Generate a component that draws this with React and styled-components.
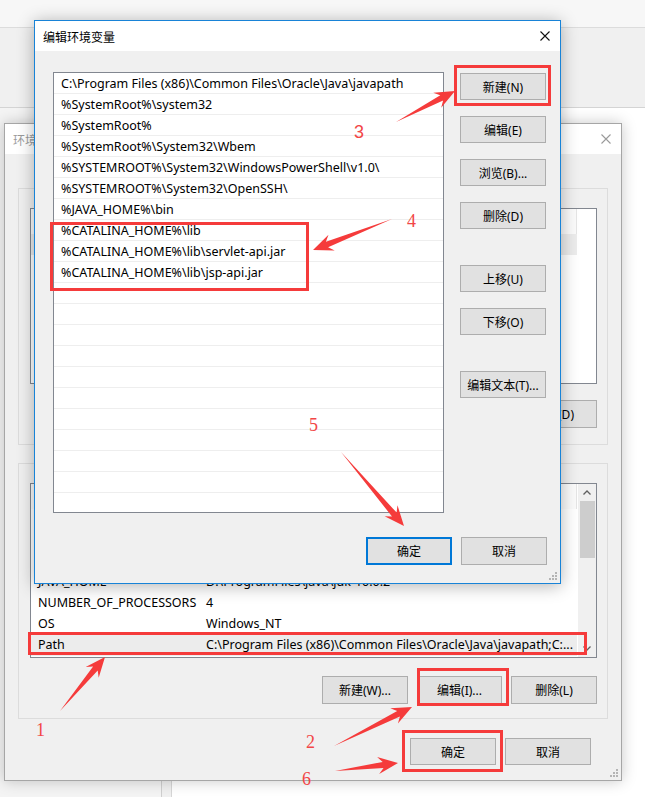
import React from "react";
import styled, { createGlobalStyle } from "styled-components";

const GlobalStyle = createGlobalStyle`
  html, body {
    margin: 0;
    padding: 0;
    background: #ffffff;
  }
  body {
    font-family: "Noto Sans", "Noto Sans CJK SC", sans-serif;
    font-size: 12px;
    color: #000;
  }
`;

const pathItems = [
  "C:\\Program Files (x86)\\Common Files\\Oracle\\Java\\javapath",
  "%SystemRoot%\\system32",
  "%SystemRoot%",
  "%SystemRoot%\\System32\\Wbem",
  "%SYSTEMROOT%\\System32\\WindowsPowerShell\\v1.0\\",
  "%SYSTEMROOT%\\System32\\OpenSSH\\",
  "%JAVA_HOME%\\bin",
  "%CATALINA_HOME%\\lib",
  "%CATALINA_HOME%\\lib\\servlet-api.jar",
  "%CATALINA_HOME%\\lib\\jsp-api.jar",
];

const userVars = [
  ["OneDrive", "C:\\Users\\Administrator\\OneDrive"],
  ["Path", "%USERPROFILE%\\AppData\\Local\\Microsoft\\WindowsApps;"],
  ["TEMP", "%USERPROFILE%\\AppData\\Local\\Temp"],
  ["TMP", "%USERPROFILE%\\AppData\\Local\\Temp"],
];

const sysVars = [
  ["CATALINA_HOME", "D:\\ProgramFiles\\apache-tomcat-9.0.12"],
  ["ComSpec", "C:\\WINDOWS\\system32\\cmd.exe"],
  ["DriverData", "C:\\Windows\\System32\\Drivers\\DriverData"],
  ["JAVA_HOME", "D:\\ProgramFiles\\java\\jdk-10.0.2"],
  ["NUMBER_OF_PROCESSORS", "4"],
  ["OS", "Windows_NT"],
  ["Path", "C:\\Program Files (x86)\\Common Files\\Oracle\\Java\\javapath;C:..."],
];

// red markup drawn over the screenshot
const boxes = [
  [455.5, 66.5, 94, 38],
  [51.5, 223.5, 256, 66],
  [29.5, 633.5, 556, 20],
  [418.5, 669.5, 89, 35],
  [403.5, 731.5, 98, 39],
];

const arrows = [
  [[396, 122], [455, 91]],
  [[392, 219], [313, 250]],
  [[341, 452], [404, 526]],
  [[60, 711], [105, 657]],
  [[334, 746], [412, 707]],
  [[335, 771], [398, 763]],
];

const marks = [
  { n: "3", x: 354, y: 123, sans: true },
  { n: "4", x: 407, y: 212 },
  { n: "5", x: 309, y: 416 },
  { n: "1", x: 36, y: 721 },
  { n: "2", x: 306, y: 733 },
  { n: "6", x: 302, y: 770 },
];

function arrowPoints([x1, y1], [x2, y2]) {
  const head = 20;
  const wing = 8.5;
  const neck = 3;
  const dx = x2 - x1;
  const dy = y2 - y1;
  const len = Math.hypot(dx, dy);
  const ux = dx / len;
  const uy = dy / len;
  const px = -uy;
  const py = ux;
  const nx = x2 - ux * (head - 5);
  const ny = y2 - uy * (head - 5);
  const bx = x2 - ux * head;
  const by = y2 - uy * head;
  return [
    [x1, y1],
    [nx + px * neck, ny + py * neck],
    [bx + px * wing, by + py * wing],
    [x2, y2],
    [bx - px * wing, by - py * wing],
    [nx - px * neck, ny - py * neck],
  ]
    .map((p) => p.map((v) => v.toFixed(1)).join(","))
    .join(" ");
}

const CloseIcon = ({ color }) => (
  <svg width="10" height="10" viewBox="0 0 10 10">
    <path d="M0.5 0.5 L9.5 9.5 M9.5 0.5 L0.5 9.5" stroke={color} strokeWidth="1.1" fill="none" />
  </svg>
);

const Grip = () => (
  <svg width="10" height="10" viewBox="0 0 10 10">
    {[[7, 1], [4, 4], [7, 4], [1, 7], [4, 7], [7, 7]].map(([x, y]) => (
      <rect key={`${x}-${y}`} x={x} y={y} width="2" height="2" fill="#b4b4b4" />
    ))}
  </svg>
);

const Chevron = ({ down }) => (
  <svg width="8" height="5" viewBox="0 0 8 5">
    <path d={down ? "M0.5 0.5 L4 4 L7.5 0.5" : "M0.5 4.5 L4 1 L7.5 4.5"} stroke="#606060" strokeWidth="1.3" fill="none" />
  </svg>
);

export default function App() {
  const emptyRows = Array.from({ length: 21 - pathItems.length });
  return (
    <>
      <GlobalStyle />
      <Desktop>
        <Backdrop>
          <TopStrip />
          <MidStrip />
          <LowerArea>
            <LeftPane />
            <Gutter />
            <RestPane />
          </LowerArea>
        </Backdrop>

        <EnvWindow>
          <TitleBar $inactive>
            <span>环境变量</span>
            <CloseIcon color="#9a9a9a" />
          </TitleBar>
          <EnvBody>
            <GroupBox $height={257}>
              <GroupLabel>Administrator 的用户变量</GroupLabel>
              <VarList $height={176}>
                <VarTable>
                  <HeadRow>
                    <HeadCell>变量</HeadCell>
                    <HeadCell>值</HeadCell>
                  </HeadRow>
                  {userVars.map(([k, v], i) => (
                    <VarRow key={k} $selected={i === 0}>
                      <VarCell>{k}</VarCell>
                      <VarCell>{v}</VarCell>
                    </VarRow>
                  ))}
                </VarTable>
              </VarList>
              <ButtonRow $top={16}>
                <Button $w={86}>新建(N)...</Button>
                <Button $w={86}>编辑(E)...</Button>
                <Button $w={86}>删除(D)</Button>
              </ButtonRow>
            </GroupBox>

            <GroupBox $height={256} $gap={18}>
              <GroupLabel>系统变量(S)</GroupLabel>
              <VarList $height={175}>
                <VarTable>
                  <HeadRow>
                    <HeadCell>变量</HeadCell>
                    <HeadCell>值</HeadCell>
                  </HeadRow>
                  {sysVars.map(([k, v]) => (
                    <VarRow key={k} $selected={k === "Path"}>
                      <VarCell>{k}</VarCell>
                      <VarCell>{v}</VarCell>
                    </VarRow>
                  ))}
                </VarTable>
                <ScrollBar>
                  <ScrollArrow>
                    <Chevron />
                  </ScrollArrow>
                  <Thumb />
                  <ScrollTrack />
                  <ScrollArrow>
                    <Chevron down />
                  </ScrollArrow>
                </ScrollBar>
              </VarList>
              <ButtonRow $top={18}>
                <Button $w={86}>新建(W)...</Button>
                <Button $w={85}>编辑(I)...</Button>
                <Button $w={86}>删除(L)</Button>
              </ButtonRow>
            </GroupBox>

            <Footer $top={19} $right={17}>
              <Button $w={86} $h={27}>确定</Button>
              <Button $w={86} $h={27}>取消</Button>
            </Footer>
          </EnvBody>
          <GripCorner>
            <Grip />
          </GripCorner>
        </EnvWindow>

        <EditWindow>
          <TitleBar>
            <span>编辑环境变量</span>
            <CloseIcon color="#111" />
          </TitleBar>
          <EditBody>
            <EditMain>
              <PathList>
                {pathItems.map((p) => (
                  <PathRow key={p}>{p}</PathRow>
                ))}
                {emptyRows.map((_, i) => (
                  <PathRow key={`e${i}`} />
                ))}
              </PathList>
              <SideButtons>
                <Button $w={86} $h={27}>新建(N)</Button>
                <Button $w={86} $h={27}>编辑(E)</Button>
                <Button $w={86} $h={27}>浏览(B)...</Button>
                <Button $w={86} $h={27}>删除(D)</Button>
                <Button $w={86} $h={27} $space>上移(U)</Button>
                <Button $w={86} $h={27}>下移(O)</Button>
                <Button $w={86} $h={27} $space>编辑文本(T)...</Button>
              </SideButtons>
            </EditMain>
            <Footer $top={24} $right={0}>
              <Button $w={86} $h={28} $primary>确定</Button>
              <Button $w={86} $h={28}>取消</Button>
            </Footer>
          </EditBody>
          <GripCorner>
            <Grip />
          </GripCorner>
        </EditWindow>

        <Markup width="645" height="797" viewBox="0 0 645 797">
          {boxes.map(([x, y, w, h]) => (
            <rect key={`${x}-${y}`} x={x} y={y} width={w} height={h} fill="none" stroke="#f53b3b" strokeWidth="3" />
          ))}
          {arrows.map(([a, b]) => (
            <polygon key={`${a[0]}-${a[1]}`} points={arrowPoints(a, b)} fill="#f53b3b" />
          ))}
        </Markup>
        {marks.map((m) => (
          <Mark key={m.n} $x={m.x} $y={m.y} $sans={m.sans}>
            {m.n}
          </Mark>
        ))}
      </Desktop>
    </>
  );
}

const Desktop = styled.div`
  position: relative;
  width: 645px;
  height: 797px;
  overflow: hidden;
  background: #ffffff;
`;

const Backdrop = styled.div`
  position: absolute;
  inset: 0;
  display: flex;
  flex-direction: column;
`;

const TopStrip = styled.div`
  height: 27px;
  background: #f7f7f7;
  border-bottom: 1px solid #dcdcdc;
`;

const MidStrip = styled.div`
  height: 79px;
  background: #f0f0f0;
  border-bottom: 1px solid #d4d4d4;
`;

const LowerArea = styled.div`
  flex: 1;
  display: flex;
  background: #fafafa;
`;

const LeftPane = styled.div`
  width: 161px;
  background: #f4f4f4;
  border-right: 1px solid #cfcfcf;
`;

const Gutter = styled.div`
  width: 9px;
  background: #f0f0f0;
  border-right: 1px solid #d6d6d6;
`;

const RestPane = styled.div`
  flex: 1;
  background: #ffffff;
`;

const Window = styled.div`
  position: absolute;
  box-sizing: border-box;
  display: flex;
  flex-direction: column;
  background: #f0f0f0;
`;

const EnvWindow = styled(Window)`
  left: 4px;
  top: 123px;
  width: 618px;
  height: 658px;
  border: 1px solid #a6a6a6;
  box-shadow: 0 0 14px rgba(0, 0, 0, 0.22);
`;

const EditWindow = styled(Window)`
  left: 34px;
  top: 20px;
  width: 527px;
  height: 564px;
  border: 1px solid #1883d7;
  box-shadow: 0 2px 16px rgba(0, 0, 0, 0.3);
`;

const TitleBar = styled.div`
  height: 30px;
  flex: none;
  background: #ffffff;
  display: flex;
  align-items: center;
  justify-content: space-between;
  padding: 0 10px 0 8px;
  color: ${(p) => (p.$inactive ? "#9a9a9a" : "#000")};
  font-family: "Noto Sans CJK SC", sans-serif;
  font-size: 12px;
`;

const EnvBody = styled.div`
  flex: 1;
  display: flex;
  flex-direction: column;
  padding: 34px 13px 0 13px;
`;

const GroupBox = styled.div`
  box-sizing: border-box;
  height: ${(p) => p.$height}px;
  margin-top: ${(p) => p.$gap || 0}px;
  border: 1px solid #dcdcdc;
  padding: 0 10px 0 11px;
  display: flex;
  flex-direction: column;
`;

const GroupLabel = styled.div`
  align-self: flex-start;
  margin: -9px 0 0 6px;
  height: 16px;
  line-height: 16px;
  padding: 0 2px;
  background: #f0f0f0;
  font-family: "Noto Sans CJK SC", sans-serif;
  font-size: 12px;
  white-space: nowrap;
`;

const VarList = styled.div`
  box-sizing: border-box;
  height: ${(p) => p.$height}px;
  margin-top: 12px;
  border: 1px solid #828790;
  background: #ffffff;
  display: flex;
  overflow: hidden;
`;

const VarTable = styled.div`
  flex: 1;
  display: flex;
  flex-direction: column;
  min-width: 0;
`;

const HeadRow = styled.div`
  height: 25px;
  flex: none;
  width: 546px;
  display: grid;
  grid-template-columns: 168px 378px;
`;

const HeadCell = styled.div`
  padding-left: 7px;
  line-height: 25px;
  border-right: 1px solid #e5e5e5;
  background: #fbfbfb;
  font-family: "Noto Sans CJK SC", sans-serif;
`;

const VarRow = styled.div`
  height: 21px;
  flex: none;
  width: 546px;
  display: grid;
  grid-template-columns: 168px 378px;
  background: ${(p) => (p.$selected ? "#ececec" : "transparent")};
`;

const VarCell = styled.div`
  padding-left: 7px;
  line-height: 20px;
  font-size: 12.5px;
  white-space: nowrap;
  overflow: hidden;
`;

const ScrollBar = styled.div`
  width: 18px;
  flex: none;
  margin-left: auto;
  background: #f0f0f0;
  display: flex;
  flex-direction: column;
  align-items: center;
`;

const ScrollArrow = styled.div`
  height: 17px;
  width: 100%;
  flex: none;
  display: flex;
  align-items: center;
  justify-content: center;
`;

const Thumb = styled.div`
  width: 15px;
  height: 57px;
  flex: none;
  background: #cdcdcd;
`;

const ScrollTrack = styled.div`
  flex: 1;
`;

const ButtonRow = styled.div`
  margin-top: ${(p) => p.$top}px;
  display: flex;
  justify-content: flex-end;
  gap: 9px;
`;

const Footer = styled.div`
  margin-top: ${(p) => p.$top}px;
  padding-right: ${(p) => p.$right}px;
  display: flex;
  justify-content: flex-end;
  gap: 9px;
`;

const Button = styled.div`
  box-sizing: border-box;
  width: ${(p) => p.$w}px;
  height: ${(p) => p.$h || 28}px;
  flex: none;
  margin-top: ${(p) => (p.$space ? 20 : 0)}px;
  background: #e1e1e1;
  border: ${(p) => (p.$primary ? "2px solid #0078d7" : "1px solid #adadad")};
  display: flex;
  align-items: center;
  justify-content: center;
  white-space: nowrap;
  font-size: 12px;
  color: #000;
`;

const EditBody = styled.div`
  flex: 1;
  display: flex;
  flex-direction: column;
  padding: 21px 13px 17px 18px;
`;

const EditMain = styled.div`
  display: flex;
  gap: 16px;
  height: 441px;
`;

const PathList = styled.div`
  box-sizing: border-box;
  width: 391px;
  height: 441px;
  border: 1px solid #828790;
  background: #ffffff;
  overflow: hidden;
`;

const PathRow = styled.div`
  box-sizing: border-box;
  height: 21px;
  padding: 2px 0 0 7px;
  line-height: 18px;
  font-size: 12.5px;
  border-bottom: 1px solid #eeeeee;
  white-space: nowrap;
`;

const SideButtons = styled.div`
  display: flex;
  flex-direction: column;
  gap: 16px;
  padding-top: 1px;
`;

const GripCorner = styled.div`
  position: absolute;
  right: 2px;
  bottom: 2px;
  display: flex;
`;

const Markup = styled.svg`
  position: absolute;
  left: 0;
  top: 0;
  pointer-events: none;
`;

const Mark = styled.span`
  position: absolute;
  left: ${(p) => p.$x}px;
  top: ${(p) => p.$y}px;
  font-family: ${(p) => (p.$sans ? '"Liberation Sans", sans-serif' : '"Liberation Serif", serif')};
  font-size: 18px;
  line-height: 18px;
  color: #f24646;
`;
